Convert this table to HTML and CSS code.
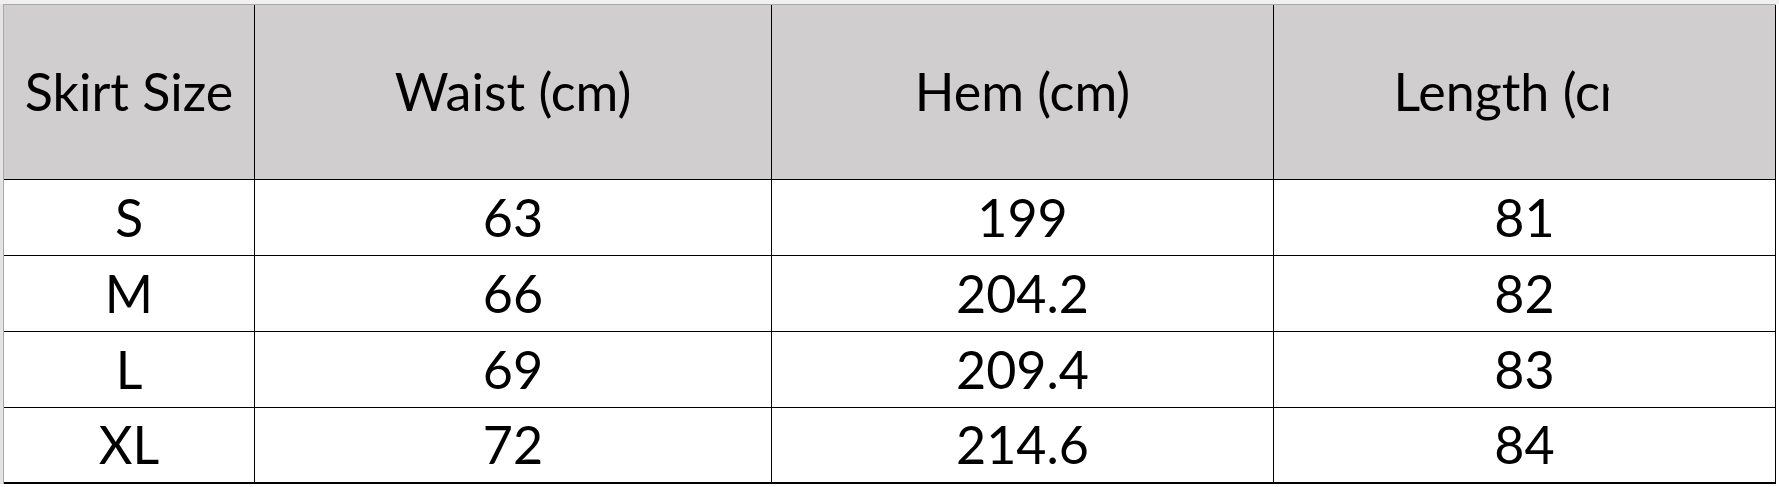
FILE: index.html
```html
<!DOCTYPE html>
<html lang="en">
<head>
<meta charset="utf-8">
<title>Skirt Size Chart</title>
<link rel="stylesheet" href="styles.css">
</head>
<body>
<div class="frame">
  <div class="sheet">
    <div class="cell head">Skirt Size</div>
    <div class="cell head">Waist (cm)</div>
    <div class="cell head">Hem (cm)</div>
    <div class="cell head"><span class="clip">Length (cm)</span></div>

    <div class="cell">S</div>
    <div class="cell">63</div>
    <div class="cell">199</div>
    <div class="cell">81</div>

    <div class="cell">M</div>
    <div class="cell">66</div>
    <div class="cell">204.2</div>
    <div class="cell">82</div>

    <div class="cell">L</div>
    <div class="cell">69</div>
    <div class="cell">209.4</div>
    <div class="cell">83</div>

    <div class="cell last">XL</div>
    <div class="cell last">72</div>
    <div class="cell last">214.6</div>
    <div class="cell last">84</div>
  </div>
</div>
</body>
</html>
```

FILE: styles.css
```css
html, body {
  margin: 0;
  padding: 0;
  background: #ffffff;
}

body {
  font-family: "Lato", "Carlito", "Open Sans", sans-serif;
  color: #000000;
  width: 1779px;
  height: 487px;
  overflow: hidden;
}

.frame {
  padding: 4px 0 0 3px;
  background: linear-gradient(#f0f0f0, #f0f0f0) top left / 100% 4px no-repeat,
              linear-gradient(#e4e4e4, #e4e4e4) top left / 3px 100% no-repeat,
              #ffffff;
}

.sheet {
  display: grid;
  grid-template-columns: 251px 517px 502px 502px;
  grid-template-rows: 175px repeat(4, 76px);
  width: 1772px;
  border-top: 1px solid #a9a9a9;
  border-left: 1px solid #a9a9a9;
}

.cell {
  box-sizing: border-box;
  display: flex;
  align-items: center;
  justify-content: center;
  border-right: 1px solid #000000;
  border-bottom: 1px solid #000000;
  font-size: 52px;
  line-height: 1;
  padding-bottom: 2px;
  white-space: nowrap;
  overflow: hidden;
}

.head {
  background: #d0cece;
  padding-bottom: 2px;
}

.last {
  border-bottom-width: 2px;
}

.clip {
  display: inline-block;
  clip-path: inset(-30px 47px -30px 0);
}
```
